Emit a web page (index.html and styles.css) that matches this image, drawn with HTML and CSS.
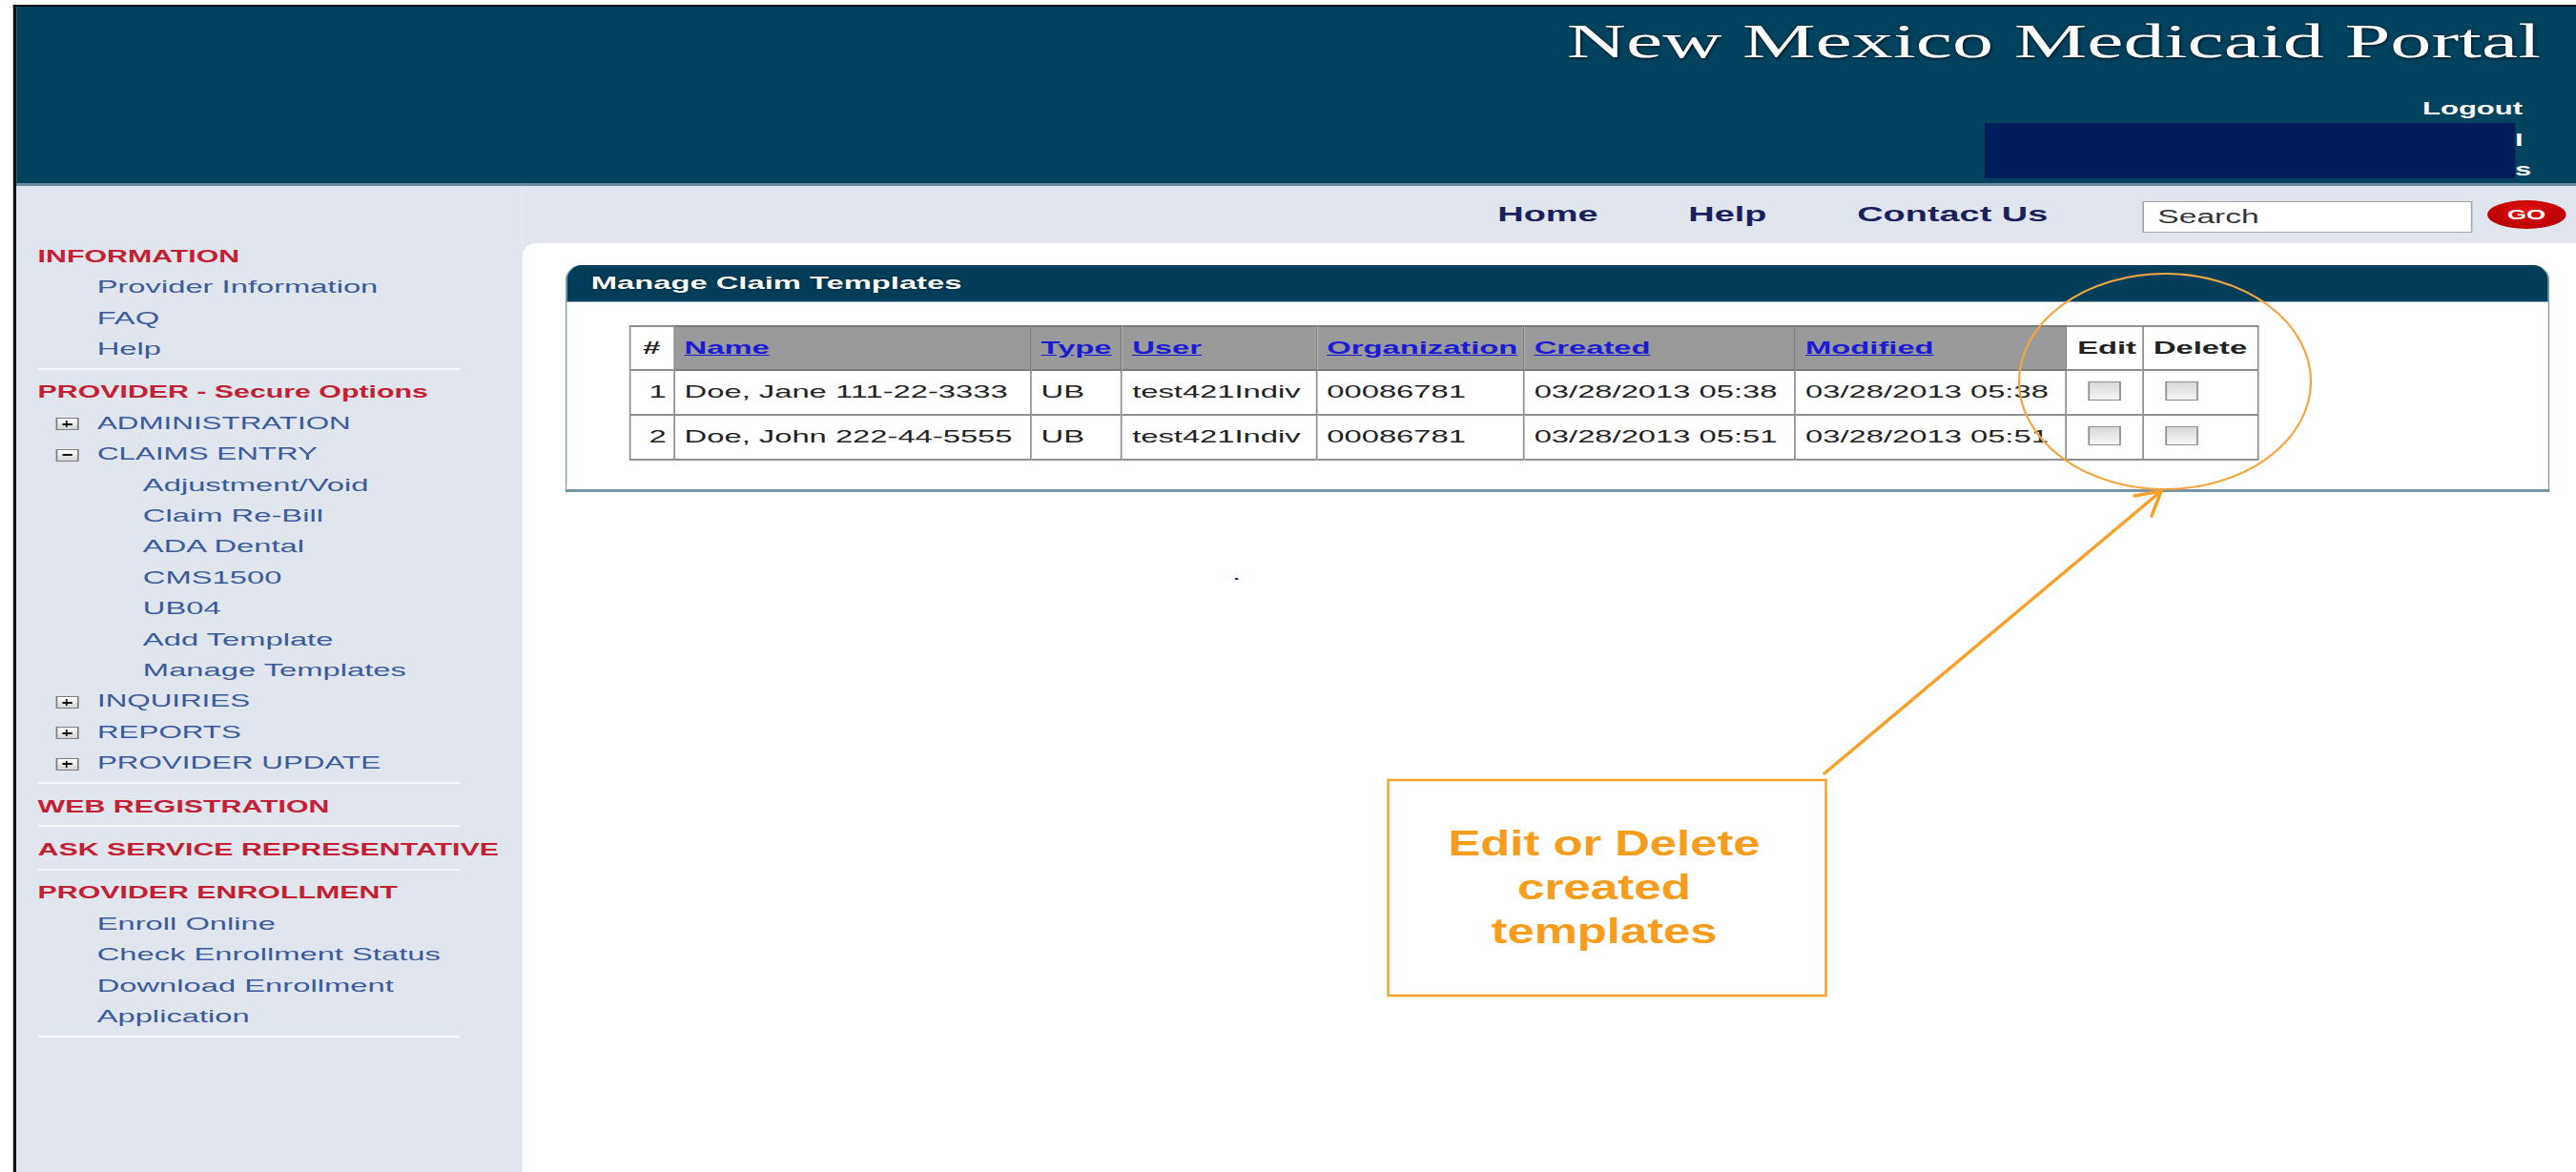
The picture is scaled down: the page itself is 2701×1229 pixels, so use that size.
FILE: index.html
```html
<!DOCTYPE html>
<html lang="en">
<head>
<meta charset="utf-8">
<title>New Mexico Medicaid Portal - Manage Claim Templates</title>
<link rel="stylesheet" href="styles.css">
</head>
<body>
<div class="page">
  <div class="frame">
    <header class="masthead">
      <h1 class="site-title">New Mexico Medicaid Portal</h1>
      <a class="logout" href="#">Logout</a>
      <div class="user-row">
        <div class="user-box"></div>
        <div class="user-tail"><span>l</span><span>s</span></div>
      </div>
    </header>

    <div class="layout">
      <aside class="sidebar">
        <section class="nav-section">
          <h2 class="nav-head">INFORMATION</h2>
          <a class="nav-link" href="#">Provider Information</a>
          <a class="nav-link" href="#">FAQ</a>
          <a class="nav-link" href="#">Help</a>
        </section>
        <section class="nav-section">
          <h2 class="nav-head">PROVIDER - Secure Options</h2>
          <div class="nav-group"><span class="toggle plus"></span><a href="#">ADMINISTRATION</a></div>
          <div class="nav-group"><span class="toggle"></span><a href="#">CLAIMS ENTRY</a></div>
          <a class="nav-link nav-sub" href="#">Adjustment/Void</a>
          <a class="nav-link nav-sub" href="#">Claim Re-Bill</a>
          <a class="nav-link nav-sub" href="#">ADA Dental</a>
          <a class="nav-link nav-sub" href="#">CMS1500</a>
          <a class="nav-link nav-sub" href="#">UB04</a>
          <a class="nav-link nav-sub" href="#">Add Template</a>
          <a class="nav-link nav-sub" href="#">Manage Templates</a>
          <div class="nav-group"><span class="toggle plus"></span><a href="#">INQUIRIES</a></div>
          <div class="nav-group"><span class="toggle plus"></span><a href="#">REPORTS</a></div>
          <div class="nav-group"><span class="toggle plus"></span><a href="#">PROVIDER UPDATE</a></div>
        </section>
        <section class="nav-section">
          <h2 class="nav-head">WEB REGISTRATION</h2>
        </section>
        <section class="nav-section">
          <h2 class="nav-head">ASK SERVICE REPRESENTATIVE</h2>
        </section>
        <section class="nav-section">
          <h2 class="nav-head">PROVIDER ENROLLMENT</h2>
          <a class="nav-link" href="#">Enroll Online</a>
          <a class="nav-link" href="#">Check Enrollment Status</a>
          <a class="nav-link" href="#">Download Enrollment</a>
          <a class="nav-link" href="#">Application</a>
        </section>
      </aside>

      <div class="main">
        <nav class="topnav">
          <a class="topnav-link" href="#">Home</a>
          <a class="topnav-link" href="#">Help</a>
          <a class="topnav-link" href="#">Contact Us</a>
          <input class="search" type="text" value="Search" aria-label="Search">
          <button class="go" type="button">GO</button>
        </nav>

        <main class="content">
          <section class="panel">
            <h2 class="panel-title">Manage Claim Templates</h2>
            <div class="panel-body">
              <table class="templates">
                <colgroup>
                  <col class="w-num"><col class="w-name"><col class="w-type"><col class="w-user">
                  <col class="w-org"><col class="w-date"><col class="w-date2"><col class="w-edit"><col class="w-del">
                </colgroup>
                <thead>
                  <tr>
                    <th class="plain num-head">#</th>
                    <th><a href="#">Name</a></th>
                    <th><a href="#">Type</a></th>
                    <th><a href="#">User</a></th>
                    <th><a href="#">Organization</a></th>
                    <th><a href="#">Created</a></th>
                    <th><a href="#">Modified</a></th>
                    <th class="plain">Edit</th>
                    <th class="plain">Delete</th>
                  </tr>
                </thead>
                <tbody>
                  <tr>
                    <td class="num">1</td>
                    <td>Doe, Jane 111-22-3333</td>
                    <td>UB</td>
                    <td>test421Indiv</td>
                    <td>00086781</td>
                    <td>03/28/2013 05:38</td>
                    <td>03/28/2013 05:38</td>
                    <td><input class="check" type="checkbox" aria-label="Edit template 1"></td>
                    <td><input class="check" type="checkbox" aria-label="Delete template 1"></td>
                  </tr>
                  <tr>
                    <td class="num">2</td>
                    <td>Doe, John 222-44-5555</td>
                    <td>UB</td>
                    <td>test421Indiv</td>
                    <td>00086781</td>
                    <td>03/28/2013 05:51</td>
                    <td>03/28/2013 05:51</td>
                    <td><input class="check" type="checkbox" aria-label="Edit template 2"></td>
                    <td><input class="check" type="checkbox" aria-label="Delete template 2"></td>
                  </tr>
                </tbody>
              </table>
            </div>
          </section>
          <p class="stray">.</p>
        </main>
      </div>
    </div>
  </div>

  <!-- help callout drawn over the page: ring round the action columns, pointer and note -->
  <svg class="callouts" viewBox="0 0 2701 1229" preserveAspectRatio="none">
    <ellipse cx="2270" cy="400" rx="153" ry="113" fill="none" stroke="#f6a63f" stroke-width="2.2"/>
    <path d="M1913 811 L2266 515 M2238 520 L2266 515 L2256 541" fill="none" stroke="#f7a12a" stroke-width="3.5" stroke-linecap="round" stroke-linejoin="round"/>
    <rect x="1455.5" y="818" width="459" height="226" fill="none" stroke="#f7a12a" stroke-width="2.5"/>
    <g class="callout-text" text-anchor="middle">
      <text x="1682" y="897" textLength="327" lengthAdjust="spacingAndGlyphs">Edit or Delete</text>
      <text x="1682" y="943" textLength="182" lengthAdjust="spacingAndGlyphs">created</text>
      <text x="1682" y="989" textLength="237" lengthAdjust="spacingAndGlyphs">templates</text>
    </g>
  </svg>
</div>
</body>
</html>
```

FILE: styles.css
```css
* {
  box-sizing: border-box;
}

html,
body {
  margin: 0;
  padding: 0;
  background: #fff;
  overflow: hidden;
}

body {
  font-family: "Liberation Sans", Arial, sans-serif;
}

.page {
  position: relative;
  width: 1568px;
  height: 1229px;
  padding: 5px 0 0 7.5px;
  transform: scaleX(1.7226);
  transform-origin: 0 0;
}

.frame {
  height: 100%;
  display: flex;
  flex-direction: column;
  border-left: 2px solid #111;
  border-top: 2px solid #111;
}

/* ---------- masthead ---------- */
.masthead {
  flex: none;
  height: 188px;
  padding-top: 11px;
  display: flex;
  flex-direction: column;
  align-items: flex-end;
  background: #034360;
  border-bottom: 3px solid #6a8aa0;
}

.site-title {
  margin: 0 21.4px 0 0;
  font: 400 50px/1 "Liberation Serif", "Times New Roman", serif;
  color: #fff;
  text-shadow: 0 0 3px rgba(0, 0, 0, 0.55), 1px 2px 2px rgba(0, 0, 0, 0.35);
}

.logout {
  margin: 37px 32.5px 0 0;
  font: 700 18px/1 "Liberation Sans", Arial, sans-serif;
  color: #fff;
  text-decoration: none;
}

.user-row {
  display: flex;
  height: 58px;
  margin: 6px 27.2px 0 0;
}

.user-box {
  width: 323px;
  background: #001d5b;
}

.user-tail {
  display: flex;
  flex-direction: column;
  padding-top: 3px;
  font: 700 18px/31px "Liberation Sans", Arial, sans-serif;
  color: #fff;
}

/* ---------- two-column body ---------- */
.layout {
  flex: 1;
  min-height: 0;
  display: flex;
}

.sidebar {
  flex: none;
  width: 308.5px;
  padding: 50.25px 38px 0 13.5px;
  background: #e1e6ee;
}

.nav-section {
  padding: 7.5px 0 3.5px;
  border-bottom: 2px solid #f5f7fa;
}

.nav-head {
  margin: 0;
  font: 700 17.6px/32.4px "Liberation Sans", Arial, sans-serif;
  color: #c32033;
  white-space: nowrap;
}

.nav-link,
.nav-group a {
  font: 400 19px/32.4px "Liberation Sans", Arial, sans-serif;
  color: #3a5a9c;
  text-decoration: none;
  white-space: nowrap;
}

.nav-group a {
  font-size: 18.2px;
}

.nav-link {
  display: block;
  padding-left: 36px;
}

.nav-sub {
  padding-left: 64px;
}

.nav-group {
  display: flex;
  align-items: center;
  height: 32.4px;
  padding-left: 10.6px;
}

.toggle {
  position: relative;
  flex: none;
  width: 14px;
  height: 13px;
  margin: 2px 11.6px 0 0;
  border: 1px solid #7d7d7d;
  background: linear-gradient(#ffffff, #d4d4d4);
}

.toggle::before {
  content: "";
  position: absolute;
  left: 3px;
  right: 3px;
  top: 4.5px;
  height: 2px;
  background: #111;
}

.toggle.plus::after {
  content: "";
  position: absolute;
  left: 5.4px;
  width: 1.2px;
  top: 2px;
  bottom: 2px;
  background: #111;
}

/* ---------- main column ---------- */
.main {
  flex: 1;
  display: flex;
  flex-direction: column;
  background: #e1e6ee;
}

.topnav {
  flex: none;
  height: 60px;
  display: flex;
  align-items: center;
  justify-content: flex-end;
  padding-right: 6.4px;
}

.topnav-link {
  margin-left: 55px;
  font: 700 22px/1 "Liberation Sans", Arial, sans-serif;
  color: #1c1f5e;
  text-decoration: none;
}

.search {
  width: 201px;
  height: 33px;
  margin: 5px 0 0 57.8px;
  padding: 0 0 0 8px;
  border: 1px solid #a7a7a7;
  background: #fff;
  font: 400 19.5px "Liberation Sans", Arial, sans-serif;
  color: #333;
}

.go {
  width: 47.6px;
  height: 30px;
  margin-left: 8.7px;
  padding: 0;
  border: none;
  border-radius: 50%;
  background: radial-gradient(ellipse at 50% 35%, #e01010, #bb0000 70%);
  font: 700 15px/30px "Liberation Sans", Arial, sans-serif;
  color: #fff;
}

.content {
  flex: 1;
  padding: 23px 16px 0 25.5px;
  background: #fff;
  border-top-left-radius: 8px 14px;
}

/* ---------- templates panel ---------- */
.panel {
  border: 1.2px solid #7f99ab;
  border-top: 0;
  border-bottom: 3px solid #7894a7;
  border-radius: 10px 10px 0 0 / 17px 17px 0 0;
  overflow: hidden;
}

.panel-title {
  margin: 0;
  height: 38.7px;
  padding-left: 15.3px;
  background: #023e5a;
  border-bottom: 1px solid #8fa9bb;
  font: 700 19px/38px "Liberation Sans", Arial, sans-serif;
  color: #fff;
  text-shadow: 0 0 2px rgba(0, 0, 0, 0.6);
}

.panel-body {
  padding: 24px 0 30px 38.4px;
}

.templates {
  table-layout: fixed;
  width: 991.2px;
  border-collapse: collapse;
  border: 1px solid #b3b3b3;
  font: 400 19px "Liberation Sans", Arial, sans-serif;
  color: #222;
}

.w-num { width: 26.7px; }
.w-name { width: 217.1px; }
.w-type { width: 55.5px; }
.w-user { width: 118.5px; }
.w-org { width: 126.2px; }
.w-date { width: 165.1px; }
.w-date2 { width: 165.5px; }
.w-edit { width: 46.3px; }
.w-del { width: 70.3px; }

.templates th,
.templates td {
  padding: 0 0 0 6px;
  border-style: solid;
  border-color: #8f8f8f;
  border-width: 2px 1px;
  text-align: left;
  white-space: nowrap;
  overflow: hidden;
}

.templates th {
  height: 46px;
  font-weight: 700;
  background: #9a9a9a;
  border-color: #7a7a7a;
}

.templates th.plain {
  background: #fff;
  border-color: #8f8f8f;
}

.templates th.num-head {
  padding: 0;
  text-align: center;
}

.templates th a {
  color: #1b1bd6;
  text-decoration: underline;
}

.templates td {
  height: 47px;
}

.templates td.num {
  padding: 0 4px 0 0;
  text-align: right;
}

.check {
  display: block;
  width: 20px;
  height: 20px;
  margin: -3px 0 0 7px;
  appearance: none;
  -webkit-appearance: none;
  border: 1px solid #8d8d8d;
  background: linear-gradient(#d9d9d9, #f6f6f6);
}

.stray {
  margin: 76px 0 0;
  padding-left: 406.5px;
  font: 400 19px/20px "Liberation Sans", Arial, sans-serif;
  color: #1d2b5e;
}

/* ---------- callout layer ---------- */
.callouts {
  position: absolute;
  left: 0;
  top: 0;
  width: 1568px;
  height: 1229px;
  pointer-events: none;
}

.callout-text text {
  font: 700 37px "Liberation Sans", Arial, sans-serif;
  fill: #f89c1c;
}
```
